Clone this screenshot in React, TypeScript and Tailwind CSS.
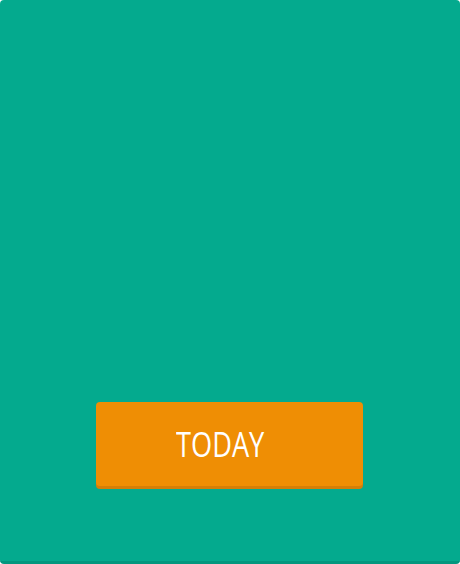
export default function App() {
  return (
    <div className="w-[460px] h-[564px] bg-white">
      <div className="h-full rounded-[4px] bg-[#04aa8e] border-b-[3px] border-[#03977e] flex flex-col items-center pt-[402px]">
        <button className="w-[267px] h-[84px] ml-[-1px] rounded-[4px] bg-[#ef8e04] shadow-[0_3px_0_#d47f08] flex items-center justify-center">
          <span className="text-white text-[34px] leading-none scale-x-[0.8] mt-[-1px] mr-[18px]" style={{ fontFamily: '"Open Sans", sans-serif' }}>
            TODAY
          </span>
        </button>
      </div>
    </div>
  );
}
